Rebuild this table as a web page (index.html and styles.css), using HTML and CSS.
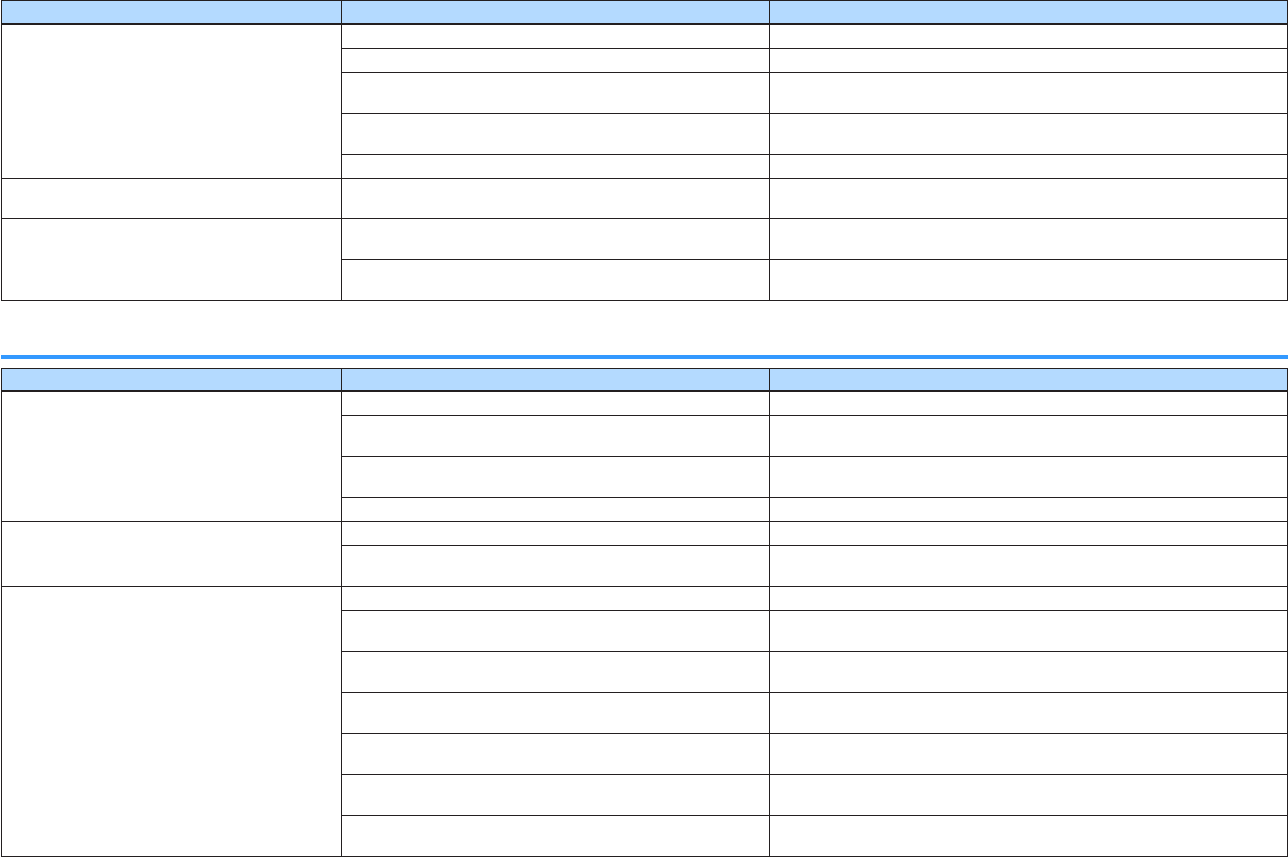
FILE: index.html
```html
<!DOCTYPE html>
<html>
<head>
<meta charset="utf-8">
<link rel="stylesheet" href="styles.css">
</head>
<body>
<div class="page">
  <table class="grid">
    <colgroup><col class="c1"><col class="c2"><col class="c3"></colgroup>
    <thead>
      <tr class="head"><th></th><th></th><th></th></tr>
    </thead>
    <tbody>
      <tr class="s"><td rowspan="5"></td><td></td><td></td></tr>
      <tr class="s"><td></td><td></td></tr>
      <tr class="d"><td></td><td></td></tr>
      <tr class="d"><td></td><td></td></tr>
      <tr class="s"><td></td><td></td></tr>
      <tr class="m"><td></td><td></td><td></td></tr>
      <tr class="d"><td rowspan="2"></td><td></td><td></td></tr>
      <tr class="d"><td></td><td></td></tr>
    </tbody>
  </table>

  <div class="rule"></div>

  <table class="grid second">
    <colgroup><col class="c1"><col class="c2"><col class="c3"></colgroup>
    <thead>
      <tr class="head"><th></th><th></th><th></th></tr>
    </thead>
    <tbody>
      <tr class="s"><td rowspan="4"></td><td></td><td></td></tr>
      <tr class="d"><td></td><td></td></tr>
      <tr class="d"><td></td><td></td></tr>
      <tr class="s"><td></td><td></td></tr>
      <tr class="s"><td rowspan="2"></td><td></td><td></td></tr>
      <tr class="d"><td></td><td></td></tr>
      <tr class="s"><td rowspan="7"></td><td></td><td></td></tr>
      <tr class="d"><td></td><td></td></tr>
      <tr class="d"><td></td><td></td></tr>
      <tr class="d"><td></td><td></td></tr>
      <tr class="d"><td></td><td></td></tr>
      <tr class="d"><td></td><td></td></tr>
      <tr class="d"><td></td><td></td></tr>
    </tbody>
  </table>
</div>
</body>
</html>
```

FILE: styles.css
```css
html, body {
  margin: 0;
  padding: 0;
  background: #ffffff;
  font-family: "Liberation Sans", Arial, sans-serif;
}

.page {
  padding: 0 0 0 1px;
}

.grid {
  border-collapse: collapse;
  table-layout: fixed;
  width: 1286px;
}

.c1 { width: 340px; }
.c2 { width: 428px; }
.c3 { width: 518px; }

.grid th,
.grid td {
  border: 1px solid #231f20;
  padding: 0;
}

.grid th {
  background: #b4daff;
  height: 22px;
  border-bottom: 2px solid #231f20;
}

.second th {
  height: 21px;
}

.grid tr.s td { height: 23px; }
.grid tr.m td { height: 39px; }
.grid tr.d td { height: 40px; }

.rule {
  height: 4px;
  background: #3399ff;
  margin: 54px 0 9px 0;
}
```
